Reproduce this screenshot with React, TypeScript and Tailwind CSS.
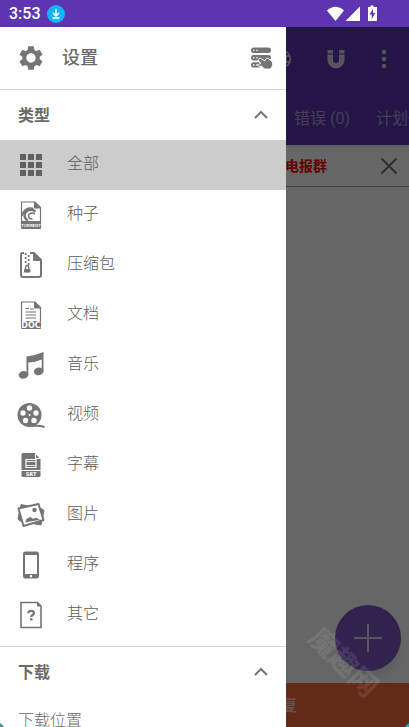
import type { ReactNode } from "react";

function GearIcon() {
  return (
    <svg viewBox="0 0 24 24" className="size-7 shrink-0" fill="#757575" aria-hidden="true">
      <path d="M19.43 12.98c.04-.32.07-.64.07-.98s-.03-.66-.07-.98l2.11-1.65c.19-.15.24-.42.12-.64l-2-3.46c-.12-.22-.39-.3-.61-.22l-2.49 1c-.52-.4-1.08-.73-1.69-.98l-.38-2.65C14.46 2.18 14.25 2 14 2h-4c-.25 0-.46.18-.49.42l-.38 2.65c-.61.25-1.17.59-1.69.98l-2.49-1c-.23-.09-.49 0-.61.22l-2 3.46c-.13.22-.07.49.12.64l2.11 1.65c-.04.32-.07.65-.07.98s.03.66.07.98l-2.11 1.65c-.19.15-.24.42-.12.64l2 3.46c.12.22.39.3.61.22l2.49-1c.52.4 1.08.73 1.69.98l.38 2.65c.03.24.24.42.49.42h4c.25 0 .46-.18.49-.42l.38-2.65c.61-.25 1.17-.59 1.69-.98l2.49 1c.23.09.49 0 .61-.22l2-3.46c.12-.22.07-.49-.12-.64l-2.11-1.65zM12 16c-2.21 0-4-1.79-4-4s1.79-4 4-4 4 1.79 4 4-1.79 4-4 4z" />
    </svg>
  );
}

function ServerTapIcon() {
  return (
    <svg viewBox="0 0 24 24" className="size-6" fill="#757575" aria-hidden="true">
      <rect x="2" y="1.5" width="20" height="5.4" rx="2.7" />
      <rect x="2" y="9" width="20" height="5.4" rx="2.7" />
      <rect x="2" y="16.2" width="10" height="5.4" rx="2.7" />
      <g fill="#fff">
        <circle cx="4.8" cy="4.2" r=".8" />
        <circle cx="8" cy="4.2" r=".8" />
        <circle cx="4.8" cy="11.7" r=".8" />
        <circle cx="8" cy="11.7" r=".8" />
        <circle cx="4.8" cy="18.9" r=".8" />
        <circle cx="8" cy="18.9" r=".8" />
      </g>
      <path
        d="M9.800 13c.7-1 1.900-.9 2.700-.3l3.300 2.300 1.300-2.200c.5-.8 1.500-.7 2.200-.2l2.900 2.200c1.500 1.200 1.900 3 1.300 4.600l-.6 1.300c-.6 1.400-1.600 2.400-3 2.400h-3c-1 0-1.700-.4-2.300-1l-2.100-1.900-2.400.2c-1.400-.2-1.300-2.100 0-2.400l1.700-.3-1.500-2.200c-.8-.7-1-1.700-.5-2.500z"
        stroke="#fff"
        strokeWidth="1"
      />
    </svg>
  );
}

function GridIcon() {
  return (
    <svg viewBox="0 0 28 28" className="size-7" fill="#616161">
      {[3, 11, 19].map((y) =>
        [3, 11, 19].map((x) => <rect key={`${x}-${y}`} x={x} y={y} width="6" height="6" />),
      )}
    </svg>
  );
}

function TorrentIcon() {
  return (
    <svg viewBox="0 0 28 28" className="size-7" fill="none" stroke="#757575">
      <path d="M4.500 1h13.500l5.500 5.500v19.500a1 1 0 0 1-1 1h-17a1 1 0 0 1-1-1z" strokeWidth="1.200" />
      <path d="M17.500 1l6 6h-6z" fill="#757575" />
      <path d="M5 15C6 9 10.500 6 16.500 7.500" strokeWidth="1.500" />
      <path d="M18.500 10.500C13.500 7 7.500 9.500 7.500 14c0 2.500 1.500 4.500 3.500 5.500" strokeWidth="2.400" />
      <path d="M18 13c-3-2-6.500-.5-6.500 2 0 2 2 3 4 3" strokeWidth="1.600" />
      <rect x="4" y="20" width="20" height="8" rx="1" fill="#757575" stroke="none" />
      <text x="14" y="25.500" fill="#fff" stroke="none" fontSize="4" fontWeight="700" textAnchor="middle" fontFamily="Liberation Sans, sans-serif">
        TORRENT
      </text>
    </svg>
  );
}

function ZipIcon() {
  return (
    <svg viewBox="0 0 28 28" className="size-7" fill="none" stroke="#757575">
      <path d="M7 2H6a2 2 0 0 0-2 2v20a2 2 0 0 0 2 2h16a2 2 0 0 0 2-2V9l-7-7h-4" strokeWidth="2" />
      <path d="M16.500 1.500l8 8h-8z" fill="#757575" />
      <path d="M8.700 2v2M11.700 4v2M8.700 6v2M11.700 8v2M8.700 10v2M11.700 12v2" strokeWidth="1.800" />
      <path d="M9.200 14.500h2l1.500 6h-5z" strokeWidth="1.300" />
      <path d="M7.700 18.500h5v2.500h-5z" fill="#757575" strokeWidth="1" />
    </svg>
  );
}

function DocIcon() {
  return (
    <svg viewBox="0 0 28 28" className="size-7" fill="none" stroke="#757575">
      <path d="M4.500 1h13.500l5.500 5.500v19.500a1 1 0 0 1-1 1h-17a1 1 0 0 1-1-1z" strokeWidth="1.200" />
      <path d="M17.500 1l6 6h-6z" fill="#757575" />
      <path d="M8.500 7.500h3.500M13 8h4M8.500 11h10.500M8.500 14h10.500M8.500 17h10.500" strokeWidth="1.100" />
      <rect x="4" y="20" width="20" height="8" rx="1" fill="#757575" stroke="none" />
      <text x="14" y="26.800" fill="#fff" stroke="none" fontSize="8" fontWeight="700" textAnchor="middle" fontFamily="DejaVu Sans, sans-serif">
        DOC
      </text>
    </svg>
  );
}

function MusicIcon() {
  return (
    <svg viewBox="0 0 28 28" className="size-7" fill="#757575">
      <path d="M9.500 5.500Q18 4.500 26.500 1v19h-1.800V8.500Q18 11.500 11.300 11.500v12.500H9.500z" />
      <ellipse cx="6.500" cy="23.800" rx="4.900" ry="3.800" transform="rotate(-12 6.500 23.800)" />
      <ellipse cx="21.700" cy="20.300" rx="4.900" ry="3.800" transform="rotate(-12 21.700 20.300)" />
    </svg>
  );
}

function ReelIcon() {
  return (
    <svg viewBox="0 0 28 28" className="size-7" fill="#757575">
      <circle cx="12.500" cy="14" r="12" />
      <path d="M15 25c4 0 6-1 12.500 1" fill="none" stroke="#757575" strokeWidth="2" />
      <g fill="#fff">
        <circle cx="12.500" cy="7" r="2.700" />
        <circle cx="19" cy="12" r="2.700" />
        <circle cx="17" cy="19.500" r="2.700" />
        <circle cx="8.500" cy="19.500" r="2.700" />
        <circle cx="6" cy="12" r="2.700" />
        <circle cx="12.500" cy="14" r="1" />
      </g>
    </svg>
  );
}

function SubtitleIcon() {
  return (
    <svg viewBox="0 0 28 28" className="size-7" fill="#757575">
      <path d="M6 2h11.500l6 6v11H4.500V3.500A1.500 1.500 0 0 1 6 2z" />
      <path d="M4.500 20h19v4.500a1.500 1.500 0 0 1-1.500 1.500H6a1.500 1.500 0 0 1-1.500-1.500z" />
      <path d="M18.500 3v4.500H23" fill="none" stroke="#fff" strokeWidth="1" />
      <path d="M9 8.500h10v8H9z" fill="none" stroke="#fff" strokeWidth="1.200" />
      <path d="M9 10.500h10M9 14.500h10" fill="none" stroke="#fff" strokeWidth=".8" />
      <text x="14" y="25" fill="#fff" fontSize="5" fontWeight="700" textAnchor="middle" fontFamily="DejaVu Sans, sans-serif">
        SRT
      </text>
    </svg>
  );
}

function PhotosIcon() {
  return (
    <svg viewBox="0 0 28 28" className="size-7" fill="none" stroke="#757575">
      <path d="M4 3.500l21 4.500 2 1.500-3 14.500-20-3.500L1 18z" fill="#757575" strokeWidth="1" />
      <path d="M1.500 7.500L21.500 3l5 16L6.500 25z" fill="#fff" strokeWidth="2" strokeLinejoin="round" />
      <circle cx="17.500" cy="9" r="2.200" fill="#757575" stroke="none" />
      <path d="M8 21.500l1.500-3.500 3.500-2 3 1.800 3-1 4 2z" fill="#757575" stroke="none" />
    </svg>
  );
}

function PhoneIcon() {
  return (
    <svg viewBox="0 0 28 28" className="size-7">
      <path
        fillRule="evenodd"
        fill="#757575"
        d="M8.500 .5h11A2.500 2.500 0 0 1 22 3v22a2.500 2.500 0 0 1-2.500 2.500h-11A2.500 2.500 0 0 1 6 25V3A2.500 2.500 0 0 1 8.500 .5zM8 4v19h12V4zM12.800 25.300a1.200 1.200 0 1 0 2.400 0 1.200 1.200 0 1 0-2.400 0z"
      />
    </svg>
  );
}

function OtherIcon() {
  return (
    <svg viewBox="0 0 28 28" className="size-7" fill="none" stroke="#757575">
      <path d="M4 1.500h16.500l3.500 3.500v21.500H4z" strokeWidth="1.600" />
      <path d="M20 1l4.500 4.500H20z" fill="#757575" stroke="none" />
      <path d="M11.300 12.200c0-3.200 5.600-3 5.600 0 0 1.800-2.700 1.900-2.700 3.800" strokeWidth="2.300" />
      <rect x="13" y="17.300" width="2.500" height="2.200" fill="#757575" stroke="none" />
    </svg>
  );
}

const types: { label: string; icon: ReactNode }[] = [
  { label: "全部", icon: <GridIcon /> },
  { label: "种子", icon: <TorrentIcon /> },
  { label: "压缩包", icon: <ZipIcon /> },
  { label: "文档", icon: <DocIcon /> },
  { label: "音乐", icon: <MusicIcon /> },
  { label: "视频", icon: <ReelIcon /> },
  { label: "字幕", icon: <SubtitleIcon /> },
  { label: "图片", icon: <PhotosIcon /> },
  { label: "程序", icon: <PhoneIcon /> },
  { label: "其它", icon: <OtherIcon /> },
];

function StatusBar() {
  return (
    <div className="flex h-[27px] shrink-0 items-center bg-[#5e35b1] pr-7 pl-[9px] text-white">
      <span className="text-base leading-6 font-medium">3:53</span>
      <svg viewBox="0 0 18 18" className="ml-[6px] size-[18px]" fill="none" stroke="#fff" aria-hidden="true">
        <circle cx="9" cy="9" r="9" fill="#12b4fb" stroke="none" />
        <path d="M9 4v6.500M6 8l3 3 3-3M5.500 13h7" strokeWidth="1.500" />
      </svg>
      <svg viewBox="0 0 54 18" className="ml-auto h-[18px] w-[54px]" fill="#fff" aria-hidden="true">
        <path d="M0 5.500Q8.500-2 17 5.500L8.500 16z" />
        <path d="M33 1.500V16H18.500z" />
        <path fillRule="evenodd" d="M41 2h2.500V.5h3V2H50v14h-9V2zM46 4l-3.500 5.500h2.200V14l3.500-6H46z" />
      </svg>
    </div>
  );
}

function Page() {
  return (
    <main className="flex h-full flex-col overflow-hidden bg-white">
      <header className="h-[118px] shrink-0 bg-[#5e35b1] text-white shadow">
        <div className="flex h-16 items-center justify-end pr-[13px]">
          <button aria-label="浏览器" className="mr-8">
            <svg viewBox="0 0 24 24" className="size-5" fill="none" stroke="#fff" strokeOpacity=".7" strokeWidth="2">
              <circle cx="12" cy="12" r="10" />
              <ellipse cx="12" cy="12" rx="5" ry="10" />
              <path d="M3 8.500h18M3 15.500h18" />
            </svg>
          </button>
          <button aria-label="磁力链接" className="mr-6">
            <svg viewBox="0 0 24 24" className="size-6" fill="#fff" fillOpacity=".75">
              <path d="M3.500 3H9v3.500H3.500zM15 3h5.500v3.500H15zM3.500 7.500H9V13a3 3 0 0 0 6 0V7.500h5.500V13a8.500 8.500 0 0 1-17 0z" />
            </svg>
          </button>
          <button aria-label="更多">
            <svg viewBox="0 0 24 24" className="size-6" fill="#fff" fillOpacity=".75">
              <circle cx="12" cy="5" r="2.200" />
              <circle cx="12" cy="12" r="2.200" />
              <circle cx="12" cy="19" r="2.200" />
            </svg>
          </button>
        </div>
        <nav className="flex h-[54px] items-center gap-[26px] overflow-hidden pt-0.5 pl-[294px] text-base whitespace-nowrap text-white/50">
          <button>错误 (0)</button>
          <button>计划任</button>
        </nav>
      </header>
      <div className="flex h-[42px] shrink-0 items-center justify-end border-b border-neutral-400 pr-2">
        <span className="mr-[50px] text-sm font-bold text-[#ff0000]">电报群</span>
        <button aria-label="关闭">
          <svg viewBox="0 0 24 24" className="size-6" fill="none" stroke="#757575" strokeWidth="2">
            <path d="M4.500 4.500l15 15M19.500 4.500l-15 15" />
          </svg>
        </button>
      </div>
      <div className="flex flex-1 items-end justify-end pr-2 pb-3">
        <button aria-label="添加" className="flex size-[66px] items-center justify-center rounded-full bg-[#7e57c2] shadow-lg">
          <svg viewBox="0 0 28 28" className="size-7" stroke="#fff" strokeOpacity=".75" strokeWidth="2">
            <path d="M14 0v28M0 14h28" />
          </svg>
        </button>
      </div>
      <footer className="flex h-11 shrink-0 items-center justify-end bg-[#f4693a] pt-0.5 pr-28 text-base font-bold text-white/70">
        <span>复</span>
      </footer>
    </main>
  );
}

function SectionHeader({ title }: { title: string }) {
  return (
    <button className="flex h-[50px] w-full items-center justify-between pt-0.5 pr-[17px] pl-[18px] text-base font-bold text-[#6b6b6b]">
      {title}
      <svg viewBox="0 0 16 16" className="size-4" fill="none" stroke="#757575" strokeWidth="2" aria-hidden="true">
        <path d="M2 10l6-6 6 6" />
      </svg>
    </button>
  );
}

function Drawer() {
  return (
    <aside className="absolute inset-y-0 left-0 w-[286px] overflow-hidden bg-white text-[#6b6b6b]">
      <div className="flex h-[63px] items-center justify-between border-b border-[#d4d4d4] pr-[13px] pl-[17px]">
        <button className="flex items-center gap-[17px] text-lg font-medium">
          <GearIcon />
          设置
        </button>
        <button aria-label="服务器">
          <ServerTapIcon />
        </button>
      </div>
      <section className="border-b border-[#d4d4d4] pb-[6px]">
        <SectionHeader title="类型" />
        <ul>
          {types.map((t, i) => (
            <li key={t.label}>
              <button
                className={`flex h-[50px] w-full items-center gap-[22px] pl-[17px] text-base font-light text-[#5c5c5c] ${i === 0 ? "bg-[#cccccc]" : ""}`}
              >
                {t.icon}
                <span className="pb-0.5">{t.label}</span>
              </button>
            </li>
          ))}
        </ul>
      </section>
      <section>
        <SectionHeader title="下载" />
        <button className="flex h-12 w-full items-center pl-[18px] text-base font-light">下载位置</button>
      </section>
    </aside>
  );
}

export default function App() {
  return (
    <div className="flex h-screen flex-col overflow-hidden font-[Roboto,'Noto_Sans_CJK_SC',sans-serif]">
      <StatusBar />
      <div className="relative min-h-0 flex-1 overflow-hidden">
        <Page />
        <div className="absolute inset-0 bg-black/60" />
        <Drawer />
        <span className="absolute right-6 bottom-11 rotate-45 text-[28px] leading-10 font-bold text-white/10">魔趣网</span>
        <i className="absolute -bottom-2 -left-2 size-3 rounded-full bg-[#4a8f9c]" />
        <i className="absolute -right-2 -bottom-2 size-3 rounded-full bg-[#13aebb]" />
      </div>
    </div>
  );
}
